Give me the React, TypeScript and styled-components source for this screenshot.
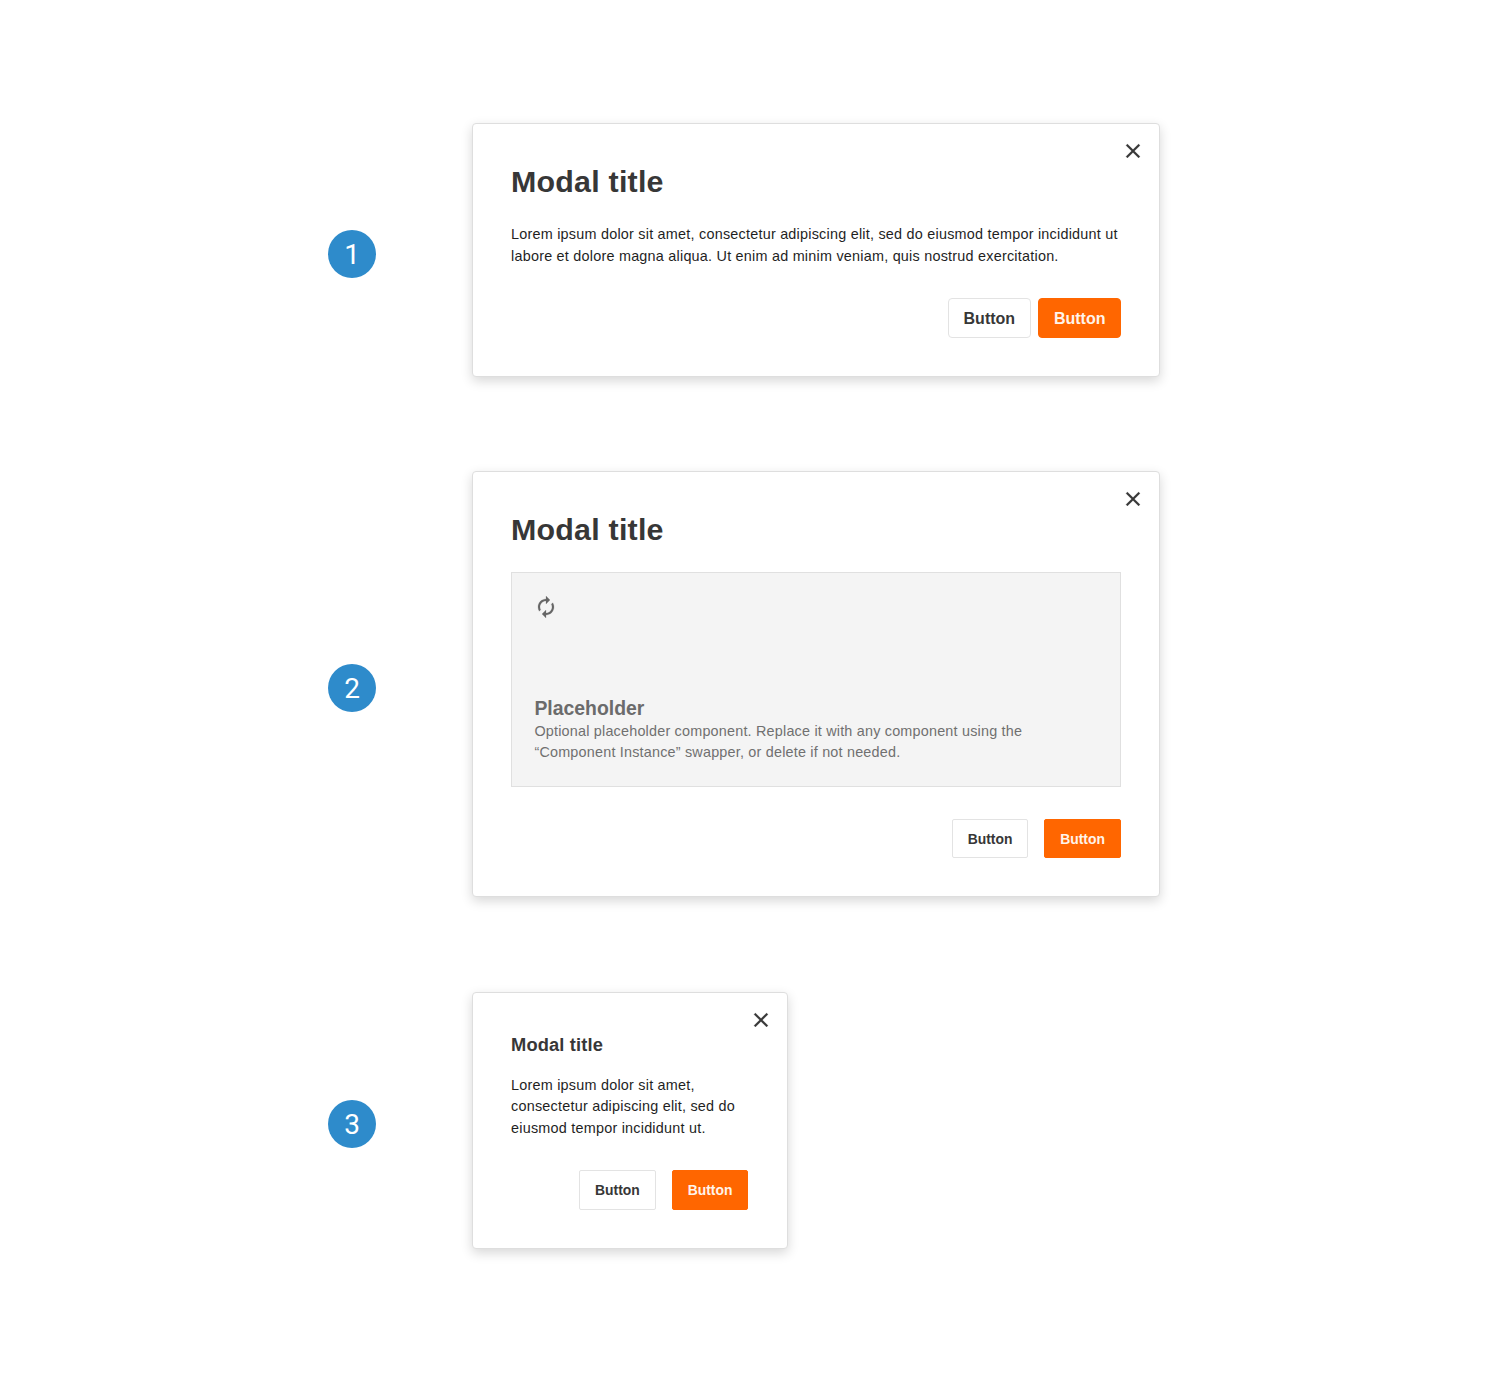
import React from "react";
import styled, { createGlobalStyle } from "styled-components";

const GlobalStyle = createGlobalStyle`
  *, *::before, *::after { box-sizing: border-box; }
  body {
    margin: 0;
    background: #fff;
    font-family: "Liberation Sans", Arial, sans-serif;
  }
`;

const Page = styled.main`
  display: flex;
  flex-direction: column;
  align-items: flex-start;
  gap: 94.4px;
  min-height: 1380px;
  padding: 123px 328px 0;
`;

const Example = styled.section`
  display: flex;
  align-items: center;
  gap: 96px;
`;

const Badge = styled.div`
  display: flex;
  align-items: center;
  justify-content: center;
  width: 48px;
  height: 48px;
  margin-top: 8px;
  border-radius: 50%;
  background: #2e8bcb;
  color: #fff;
  font: 400 28px/49px Roboto, sans-serif;
`;

const Dialog = styled.article<{ $small?: boolean; $height: number }>`
  position: relative;
  display: flex;
  flex-direction: column;
  width: ${(p) => (p.$small ? 316 : 688)}px;
  height: ${(p) => p.$height}px;
  padding: 38px ${(p) => (p.$small ? 38.6 : 38)}px 38px 38px;
  border: 1px solid #dedede;
  border-radius: 4px;
  background: #fff;
  box-shadow: 0 4px 12px rgba(0, 0, 0, 0.16);
`;

const CloseButton = styled.button`
  position: absolute;
  top: 14.8px;
  right: 14.5px;
  display: flex;
  width: 24px;
  height: 24px;
  padding: 0;
  border: 0;
  background: none;
  color: #373737;
`;

const Title = styled.h2<{ $small?: boolean }>`
  margin: 0;
  color: #373737;
  font-weight: 700;
  font-size: ${(p) => (p.$small ? 18.3 : 30.4)}px;
  line-height: ${(p) => (p.$small ? 28 : 38)}px;
  padding-bottom: ${(p) => (p.$small ? 0 : 2)}px;
  letter-spacing: ${(p) => (p.$small ? 0.15 : 0.22)}px;
`;

const Text = styled.p<{ $top?: number; $muted?: boolean }>`
  margin: ${(p) => p.$top ?? 0}px 0 0;
  color: ${(p) => (p.$muted ? "#707070" : "#1f1f1f")};
  font-size: 14.4px;
  line-height: 21.7px;
  letter-spacing: ${(p) => (p.$muted ? 0.2 : 0.23)}px;
  white-space: nowrap;
`;

const Slot = styled.div`
  display: flex;
  flex-direction: column;
  justify-content: space-between;
  height: 215px;
  margin-top: 22px;
  padding: 22px 22px 22.3px 22.4px;
  border: 1px solid #e0e0e0;
  background: #f4f4f4;
  color: #666;
`;

const SlotTitle = styled.h3`
  margin: 0;
  font-size: 19.4px;
  line-height: 26px;
  color: #6b6b6b;
`;

const Actions = styled.div<{ $gap: number }>`
  display: flex;
  justify-content: flex-end;
  gap: ${(p) => p.$gap}px;
  margin-top: auto;
`;

const Button = styled.button<{ $primary?: boolean; $large?: boolean }>`
  width: ${(p) => (p.$large ? 82.6 : 76.8)}px;
  height: ${(p) => (p.$large ? 40 : 39.5)}px;
  padding: ${(p) => (p.$large ? "1px 0 0" : "0")};
  border: 1px solid ${(p) => (p.$primary ? "#ff6600" : "#e3e3e3")};
  border-radius: ${(p) => (p.$large ? 4 : 2)}px;
  background: ${(p) => (p.$primary ? "#ff6600" : "#fff")};
  color: ${(p) => (p.$primary ? "#fff4eb" : "#373737")};
  font-family: inherit;
  font-weight: 700;
  font-size: ${(p) => (p.$large ? 16 : 13.9)}px;
`;

const Close = () => (
  <CloseButton aria-label="Close">
    <svg width="24" height="24" viewBox="0 0 24 24" fill="currentColor" stroke="currentColor" strokeWidth="0.2">
      <path d="M19 6.41 17.59 5 12 10.59 6.41 5 5 6.41 10.59 12 5 17.59 6.41 19 12 13.41 17.59 19 19 17.59 13.41 12z" />
    </svg>
  </CloseButton>
);

const Autorenew = () => (
  <svg width="24" height="24" viewBox="0 0 24 24" fill="currentColor" stroke="currentColor" strokeWidth="0.2">
    <path d="M12 6v3l4-4-4-4v3c-4.42 0-8 3.58-8 8 0 1.57.46 3.03 1.24 4.26L6.7 14.8c-.45-.83-.7-1.79-.7-2.8 0-3.31 2.69-6 6-6zm6.76 1.74L17.3 9.2c.44.84.7 1.79.7 2.8 0 3.31-2.69 6-6 6v-3l-4 4 4 4v-3c4.42 0 8-3.58 8-8 0-1.57-.46-3.03-1.24-4.26z" />
  </svg>
);

const Buttons = ({ large }: { large?: boolean }) => (
  <Actions $gap={large ? 7.8 : 15.8}>
    <Button $large={large}>Button</Button>
    <Button $large={large} $primary>
      Button
    </Button>
  </Actions>
);

export default function App() {
  return (
    <>
      <GlobalStyle />
      <Page>
        <Example>
          <Badge>1</Badge>
          <Dialog $height={254}>
            <Close />
            <Title>Modal title</Title>
            <Text $top={22}>
              Lorem ipsum dolor sit amet, consectetur adipiscing elit, sed do eiusmod tempor incididunt ut
              <br />
              labore et dolore magna aliqua. Ut enim ad minim veniam, quis nostrud exercitation.
            </Text>
            <Buttons large />
          </Dialog>
        </Example>
        <Example>
          <Badge>2</Badge>
          <Dialog $height={426}>
            <Close />
            <Title>Modal title</Title>
            <Slot>
              <Autorenew />
              <div>
                <SlotTitle>Placeholder</SlotTitle>
                <Text $muted>
                  Optional placeholder component. Replace it with any component using the
                  <br />
                  “Component Instance” swapper, or delete if not needed.
                </Text>
              </div>
            </Slot>
            <Buttons />
          </Dialog>
        </Example>
        <Example>
          <Badge>3</Badge>
          <Dialog $small $height={257}>
            <Close />
            <Title $small>Modal title</Title>
            <Text $top={15.8}>
              Lorem ipsum dolor sit amet,
              <br />
              consectetur adipiscing elit, sed do
              <br />
              eiusmod tempor incididunt ut.
            </Text>
            <Buttons />
          </Dialog>
        </Example>
      </Page>
    </>
  );
}
